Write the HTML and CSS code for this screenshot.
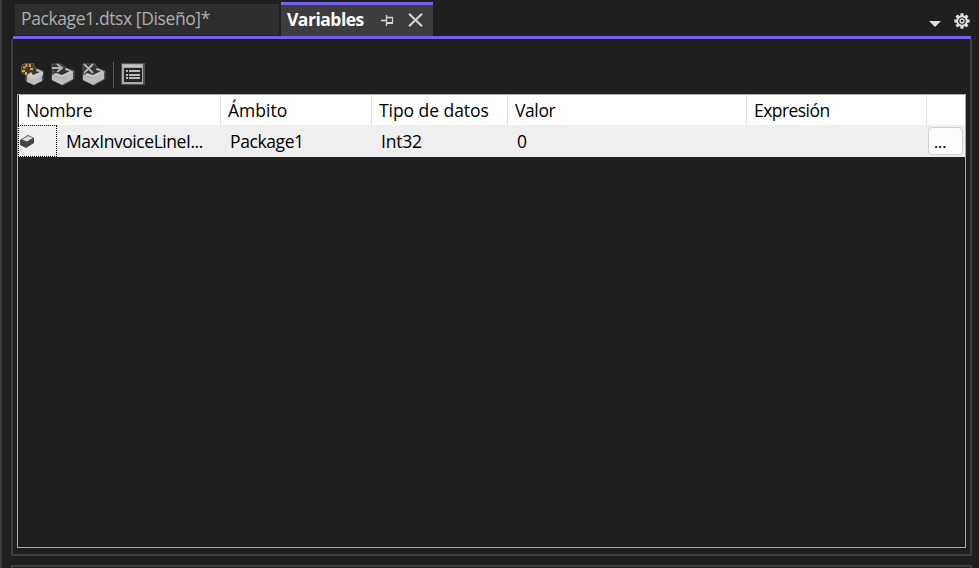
FILE: index.html
```html
<!DOCTYPE html>
<html lang="es">
<head>
<meta charset="utf-8">
<title>Variables</title>
<link rel="stylesheet" href="styles.css">
</head>
<body>
<div class="window">
  <header class="tabs">
    <div class="tab"><span class="t-package">Package1.dtsx [Diseño]*</span></div>
    <div class="tab active">
      <span class="t-variables">Variables</span>
      <svg class="pin" width="13" height="12" viewBox="0 0 13 12"><path d="M0 5.500h5M5.500 0v11M6 2.500h5.500v6" fill="none" stroke="#d6d6d6" stroke-width="1.300"/><path d="M6 7h6v2H6z" fill="#d6d6d6"/></svg>
      <svg class="close" width="15" height="14" viewBox="0 0 15 14"><path d="M1 .7l13 12.600M14 .7L1 13.300" stroke="#d6d6d6" stroke-width="2"/></svg>
    </div>
    <div class="actions">
      <svg width="12" height="6" viewBox="0 0 12 6"><path d="M0 0h12L6 6z" fill="#e0e0e0"/></svg>
      <svg class="gear" width="16" height="16" viewBox="-8 -8 16 16"><g fill="#dcdcdc"><path id="g" d="M-1.500-7.700h3l.3 3h-3.600zM-1.500 7.700h3l.3-3h-3.600zM-7.700-1.500v3l3 .3v-3.600zM7.700-1.500v3l-3 .3v-3.600z"/><use href="#g" transform="rotate(45)"/></g><circle r="4.700" fill="none" stroke="#dcdcdc" stroke-width="2.200"/><circle r="3.600" fill="#1f1f1f"/><circle r="1.900" fill="none" stroke="#dcdcdc" stroke-width="1.500"/></svg>
    </div>
  </header>
  <main class="panel">
    <div class="toolbar">
      <svg width="23" height="23" viewBox="0 0 23 23"><path d="M1 2l5-2h6l2 5 8 3v9l-9 4-8-3v-6l-5-3z" fill="#3a3a38" stroke="#666662"/><path d="M6 12l6 3 9-5v8l-8 4-7-3z" fill="#bcbcbc"/><path d="M6 12l4-3 2 3 7-3-4-1 1-2 6 3v3l-9 5z" fill="#cacaca"/><path d="M2 4.500h2.500M5.500 1v3M9 1v3M9 6h3M1 8h3M5 12V9" stroke="#d9a04c" stroke-width="2"/></svg>
      <svg width="24" height="23" viewBox="0 0 24 23"><path d="M1 1h9l5 4 8 3v8l-11 6-11-5v-7l3-1-3-1z" fill="#333" stroke="#5c5c5c"/><path d="M1 12l10 3 11-6v7l-11 6-10-5z" fill="#bcbcbc"/><path d="M1 12l4-2 6 2 8-4-5-1 1-2 8 4-12 6z" fill="#c8c8c8"/><path d="M1 5h9M6 1l5 4-5 4" fill="none" stroke="#b5b5b5" stroke-width="2"/></svg>
      <svg width="24" height="23" viewBox="0 0 24 23"><path d="M1 1h12l2 4 8 3v8l-11 6-11-5v-7l3-1-3-1z" fill="#333" stroke="#5c5c5c"/><path d="M1 12l10 3 11-6v7l-11 6-10-5z" fill="#bcbcbc"/><path d="M1 12l4-2 6 2 8-4-5-1 1-2 8 4-12 6z" fill="#c8c8c8"/><path d="M2 1l9 9M11 1L2 10" stroke="#333" stroke-width="4"/><path d="M2 1l9 9M11 1L2 10" stroke="#b5b5b5" stroke-width="2"/></svg>
      <i class="separator"></i>
      <svg width="24" height="22" viewBox="0 0 24 22" shape-rendering="crispEdges"><path d="M0 0h24v22H0z" fill="#505050"/><path d="M1 1h21v20H1z" fill="#a9aaa7"/><path d="M2 2h19v2H2z" fill="#c3c3c1"/><path d="M3 5h18v14H3z" fill="#252525"/><path d="M5 8h2m1 0h11M5 12h2m1 0h11M5 15h2m1 0h11" stroke="#b8b8b5" stroke-width="2"/></svg>
    </div>
    <section class="list">
      <div class="grid head">
        <div><span class="h1">Nombre</span></div><div><span class="h2">Ámbito</span></div><div><span class="h3">Tipo de datos</span></div><div><span class="h4">Valor</span></div><div><span class="h5">Expresión</span></div><div></div>
      </div>
      <div class="grid row">
        <div class="name"><div class="focus"><svg width="15" height="13" viewBox="0 0 15 13"><path d="M0 5l8-5 6 3v5l-8 5-6-3z" fill="#444"/><path d="M2 4.500l6-3.500 5 2L7 6.500z" fill="#ddd"/></svg></div><span class="r1">MaxInvoiceLineI...</span></div>
        <div><span class="r2">Package1</span></div><div><span class="r3">Int32</span></div><div><span>0</span></div><div></div><div class="last"><button>...</button></div>
      </div>
    </section>
  </main>
  <footer class="next"></footer>
</div>
</body>
</html>
```
FILE: styles.css
```css
* { box-sizing: border-box; }
body { margin: 0; background: #1f1f1f; color: #000; font: 17.5px/24px "Open Sans", "Noto Sans", sans-serif; overflow: hidden; }
svg { display: block; flex: none; }
span { white-space: nowrap; }
.window { height: 568px; padding: 2px 7px 0 9px; border-left: 2px solid #3d3d3d; display: flex; flex-direction: column; }
.tabs { height: 37px; flex: none; margin: 0 1px 0 2px; padding-left: 2px; border-bottom: 3px solid #7160e8; display: flex; align-items: flex-end; }
.tab { width: 264px; height: 31px; margin: 0 2px 1px 0; padding: 0 6px 3px; display: flex; align-items: center; background: #2e2e2e; color: #adadad; }
.active { width: 152px; height: 34px; margin: 0; padding-bottom: 2px; border-top: 3px solid #7160e8; background: #3d3d3d; color: #fff; font-weight: 700; }
.t-package { letter-spacing: -.4px; }
.t-variables { width: 94px; letter-spacing: -.5px; margin-top: -2px; }
.pin { margin-top: 3px; }
.close { margin: 1px 0 0 14px; }
.actions { margin-left: auto; display: flex; align-items: center; gap: 13px; padding-bottom: 7px; }
.actions svg:first-child { margin-top: 6px; }
.actions .gear { margin-right: 1px; }
.panel { height: 517px; flex: none; border: 2px solid #3d3d3d; border-top: 0; padding: 0 4px; }
.toolbar { height: 55px; padding: 24px 0 0 4px; display: flex; align-items: flex-start; }
.toolbar svg + svg { margin-left: 7px; }
.separator { width: 1px; height: 26px; margin: -1px 7px 0 7px; background: #5c5c5c; }
.list { height: 454px; border: 1px solid #ababab; }
.grid { display: grid; grid-template-columns: 203px 151px 136px 239px 180px 38px; }
.head { height: 30px; background: #fff; border-left: 1px solid #1f1f1f; grid-template-columns: 202px 151px 136px 239px 180px 1fr; }
.head > div { display: flex; align-items: center; padding: 0 0 1px 7px; border-right: 1px solid #e1e1e1; }
.head > div:last-child { border: 0; }
.row { height: 32px; background: #efefef; }
.row > div { display: flex; align-items: center; padding: 0 0 1px 9px; }
.row > .name { padding: 0; }
.focus { width: 39px; height: 32px; margin-right: 9px; border: 1px dotted #000; display: flex; align-items: center; padding-left: 1px; }
.row > .last { padding: 0 0 0 1px; }
.h1 { letter-spacing: -.2px; }
.h3 { letter-spacing: -.05px; }
.h4 { letter-spacing: -.4px; }
.h5 { letter-spacing: -.55px; }
.r1 { letter-spacing: -.45px; }
.r2 { letter-spacing: -.4px; }
.r3 { letter-spacing: -.2px; }
button { width: 35px; height: 28px; padding: 2px 0 0 5px; border: 1px solid #cfcfcf; border-radius: 4px; background: #fdfdfd; color: #000; font: inherit; font-size: 15px; font-weight: 600; line-height: 20px; text-align: left; }
.next { height: 3px; margin-top: 9px; border: 2px solid #3d3d3d; border-bottom: 0; }
```
